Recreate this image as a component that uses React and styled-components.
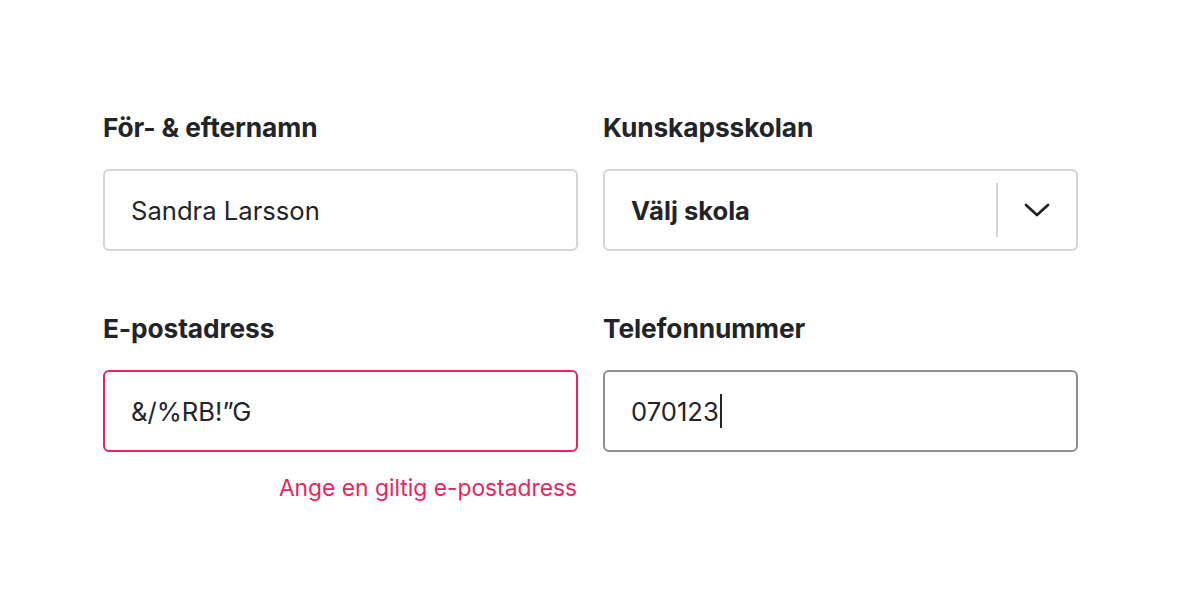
import React from 'react'
import styled, { createGlobalStyle } from 'styled-components'

const GlobalStyle = createGlobalStyle`
  body {
    margin: 0;
    background: #fff;
    font-family: Inter, "Noto Sans", sans-serif;
    color: #222428;
  }
`

const Page = styled.div`
  width: 1180px;
  height: 613px;
  padding: 113px 0 0 103px;
  box-sizing: border-box;
`

const Grid = styled.div`
  display: grid;
  grid-template-columns: 475px 475px;
  column-gap: 25px;
  row-gap: 63px;
  align-items: start;
`

const Field = styled.div`
  display: flex;
  flex-direction: column;
`

const Label = styled.label`
  font-size: 26.3px;
  line-height: 30px;
  font-weight: 700;
  letter-spacing: -0.1px;
  margin-bottom: 26px;
`

const Box = styled.div`
  height: 82px;
  box-sizing: border-box;
  border: 2px solid ${p => p.$state === 'error' ? '#e8265e' : p.$state === 'focus' ? '#8c8e91' : '#d4d5d8'};
  border-radius: 6px;
  display: flex;
  align-items: center;
  padding-left: 26px;
  font-size: 25.6px;
  font-weight: ${p => p.$bold ? 700 : 400};
`

const Caret = styled.span`
  display: inline-block;
  width: 2px;
  height: 34px;
  background: #222428;
  margin-left: 1px;
`

const Value = styled.span`
  flex: 1;
  display: flex;
  align-items: center;
`

const Divider = styled.span`
  width: 2px;
  height: 54px;
  background: #d4d5d8;
`

const Toggle = styled.span`
  width: 78px;
  display: flex;
  justify-content: center;
  align-items: center;
`

const ErrorText = styled.div`
  color: #e8265e;
  font-size: 22.8px;
  text-align: right;
  margin-top: 22px;
  margin-right: 1px;
`

const Chevron = () => (
  <svg width="26" height="16" viewBox="0 0 26 16" fill="none">
    <path d="M2 3 L13 13 L24 3" stroke="#222428" strokeWidth="2.8" strokeLinecap="round" strokeLinejoin="round" />
  </svg>
)

export default function App() {
  return (
    <Page>
      <GlobalStyle />
      <Grid>
        <Field>
          <Label>För- &amp; efternamn</Label>
          <Box>Sandra Larsson</Box>
        </Field>
        <Field>
          <Label>Kunskapsskolan</Label>
          <Box $bold>
            <Value>Välj skola</Value>
            <Divider />
            <Toggle><Chevron /></Toggle>
          </Box>
        </Field>
        <Field>
          <Label>E-postadress</Label>
          <Box $state="error">&amp;/%RB!”G</Box>
          <ErrorText>Ange en giltig e-postadress</ErrorText>
        </Field>
        <Field>
          <Label>Telefonnummer</Label>
          <Box $state="focus">
            <Value>070123<Caret /></Value>
          </Box>
        </Field>
      </Grid>
    </Page>
  )
}
